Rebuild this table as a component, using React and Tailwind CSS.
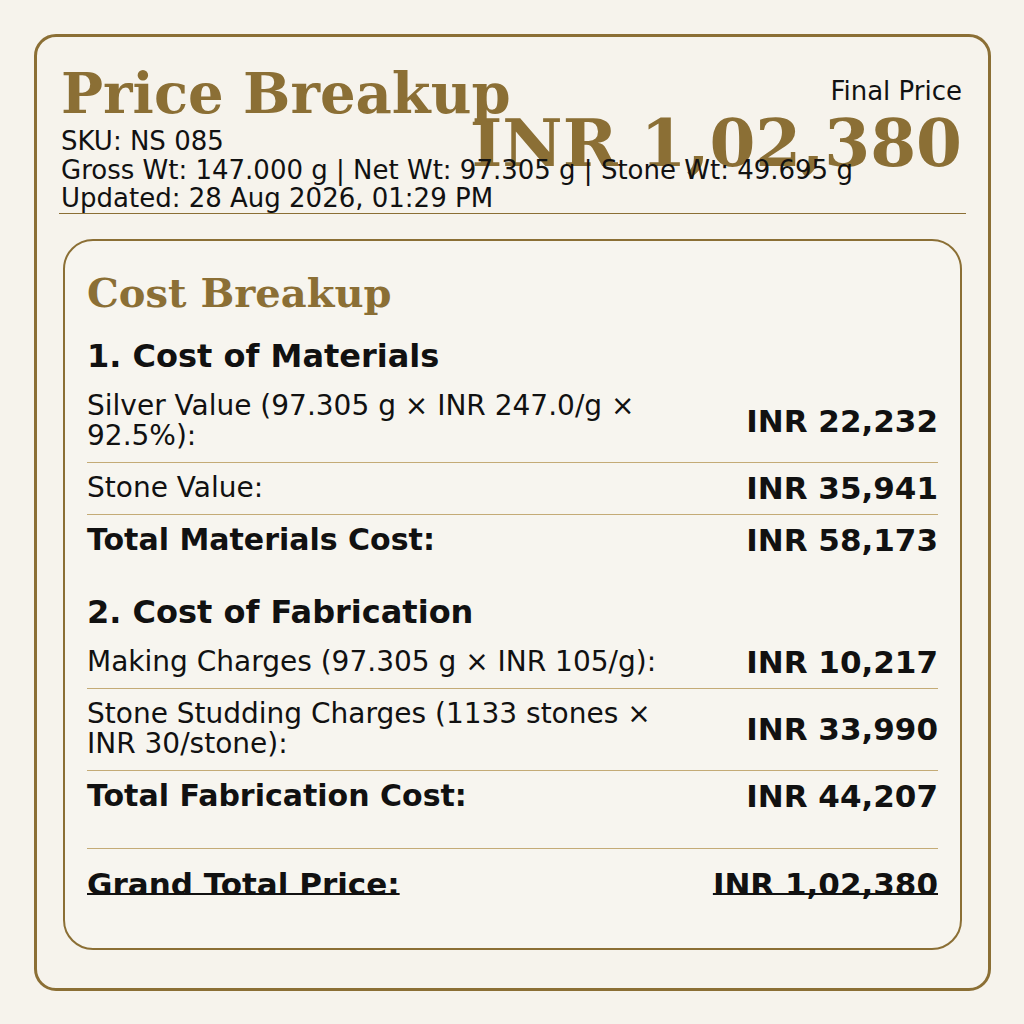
import React from 'react';

const serif = { fontFamily: '"DejaVu Serif", "Liberation Serif", serif' };

const materials = [
  { label: 'Silver Value (97.305 g × INR 247.0/g × 92.5%):', amount: 'INR 22,232' },
  { label: 'Stone Value:', amount: 'INR 35,941' },
];

const fabrication = [
  { label: 'Making Charges (97.305 g × INR 105/g):', amount: 'INR 10,217' },
  { label: 'Stone Studding Charges (1133 stones × INR 30/stone):', amount: 'INR 33,990' },
];

function Row({ label, amount, total }) {
  return (
    <div className={`flex items-center justify-between gap-6 py-[10px] ${total ? '' : 'border-b border-[#c4ab76]'}`}>
      <div className={`max-w-[580px] leading-[30.5px] ${total ? 'text-[30px] font-bold' : 'text-[28px]'}`}>{label}</div>
      <div className="shrink-0 text-[31px] font-bold leading-[31px]">{amount}</div>
    </div>
  );
}

function Section({ title, rows, totalLabel, totalAmount, className }) {
  return (
    <div className={className}>
      <h3 className="mb-[6px] text-[32px] font-bold leading-[38px]">{title}</h3>
      {rows.map((r, i) => (
        <Row key={i} label={r.label} amount={r.amount} />
      ))}
      <Row label={totalLabel} amount={totalAmount} total />
    </div>
  );
}

export default function App() {
  return (
    <div
      className="min-h-[1024px] w-full bg-[#f6f3ec] p-[34px] text-[#111111]"
      style={{ fontFamily: '"DejaVu Sans", "Liberation Sans", sans-serif' }}
    >
      <div className="h-[957px] w-[957px] rounded-[22px] border-[3px] border-[#8b6f35] bg-[#f6f3ec] px-[22px] pt-[23px]">
        {/* header */}
        <div className="flex justify-between border-b border-[#8b6f35]">
          <div className="relative min-w-0 whitespace-nowrap pl-[2px]">
            <h1 className="text-[56px] font-bold leading-[1.2] text-[#8b6f35]" style={serif}>
              Price Breakup
            </h1>
            <div className="text-[26px] leading-[28.5px]">SKU: NS 085</div>
            <div className="text-[26px] leading-[28.5px]">
              Gross Wt: 147.000 g | Net Wt: 97.305 g | Stone Wt: 49.695 g
            </div>
            <div className="text-[26px] leading-[28.5px]">Updated: 28 Aug 2026, 01:29 PM</div>
          </div>
          <div className="mr-[4px] mt-[17px] flex shrink-0 flex-col items-end whitespace-nowrap">
            <div className="text-[26px] leading-[28.5px]">Final Price</div>
            <div className="mt-[4px] text-[66px] font-bold leading-none text-[#8b6f35]" style={serif}>
              INR 1,02,380
            </div>
          </div>
        </div>

        {/* cost breakup card */}
        <div className="mx-[4px] mt-[25px] rounded-[30px] border-2 border-[#8b6f35] bg-[#f7f5ef] px-[22px] pb-[22px] pt-[28px]">
          <h2 className="mb-5 text-[40px] font-bold leading-[1.2] text-[#8b6f35]" style={serif}>
            Cost Breakup
          </h2>

          <Section
            title="1. Cost of Materials"
            rows={materials}
            totalLabel="Total Materials Cost:"
            totalAmount="INR 58,173"
          />

          <Section
            className="mt-[27px]"
            title="2. Cost of Fabrication"
            rows={fabrication}
            totalLabel="Total Fabrication Cost:"
            totalAmount="INR 44,207"
          />

          <div className="mt-[26px] flex items-center justify-between border-t border-[#c4ab76] pb-[27px] pt-[20px] text-[31px] font-bold leading-[30px]">
            <span className="underline decoration-2 underline-offset-[-2px] [text-decoration-skip-ink:none]">Grand Total Price:</span>
            <span className="underline decoration-2 underline-offset-[-2px] [text-decoration-skip-ink:none]">INR 1,02,380</span>
          </div>
        </div>
      </div>
    </div>
  );
}
